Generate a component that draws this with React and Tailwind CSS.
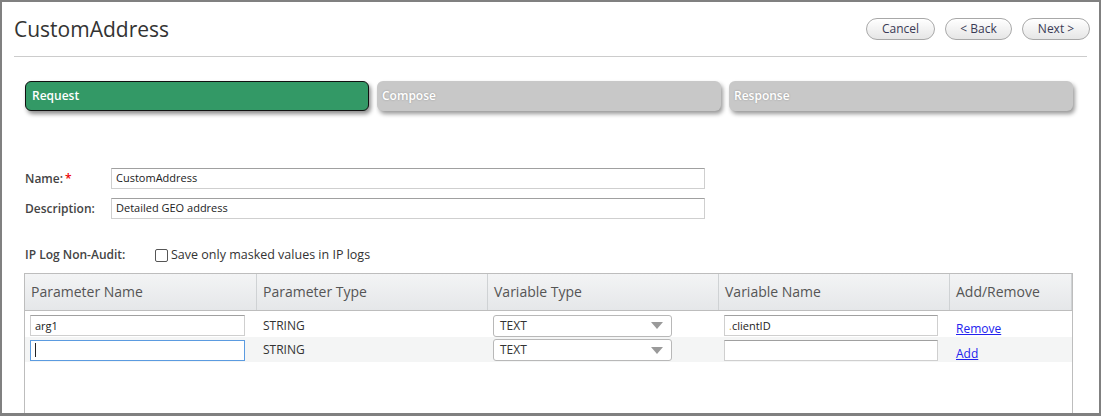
import React from "react";

const font = { fontFamily: '"Open Sans", "Noto Sans", Arial, sans-serif' };

function PillButton({ children, w }) {
  return (
    <button
      className={`h-[22px] ${w} rounded-full border border-[#a8a8a8] bg-gradient-to-b from-white to-[#e6e6e6] text-[12px] leading-none text-[#3a3a55] shadow-[inset_0_1px_0_#fff]`}
    >
      {children}
    </button>
  );
}

function Tab({ label, active }) {
  return (
    <div
      className={
        active
          ? "flex h-[30px] w-[344px] items-center rounded-[6px] border border-[#111] bg-[#339966] pl-[6px] text-[12px] font-semibold text-white shadow-[2px_3px_4px_rgba(0,0,0,0.45)]"
          : "flex h-[30px] w-[344px] items-center rounded-[6px] bg-[#c8c8c8] pl-[5px] text-[12px] font-semibold text-white shadow-[2px_3px_4px_rgba(0,0,0,0.4)] [text-shadow:0_0_2px_rgba(0,0,0,0.25)]"
      }
    >
      {label}
    </div>
  );
}

function TextInput({ value, w, focused }) {
  return (
    <div
      className={
        focused
          ? `flex h-[21px] ${w} items-center border border-[#5b9be0] bg-white pl-[4px] text-[11px] text-[#222]`
          : `flex h-[21px] ${w} items-center border border-[#cfcfcf] border-t-[#a0a0a0] bg-white pl-[4px] text-[11px] text-[#222]`
      }
    >
      {focused ? <span className="h-[14px] w-px bg-[#222]" /> : value}
    </div>
  );
}

function Select() {
  return (
    <div className="flex h-[22px] w-[179px] items-center justify-between rounded-[3px] border border-[#b8b8b8] bg-white pl-[6px] pr-[8px] text-[12px] text-[#333]">
      <span>TEXT</span>
      <svg width="12" height="7" viewBox="0 0 12 7">
        <path d="M0 0 L12 0 L6 7 Z" fill="#9a9a9a" />
      </svg>
    </div>
  );
}

const cols = ["Parameter Name", "Parameter Type", "Variable Type", "Variable Name", "Add/Remove"];
const gridCols = "grid grid-cols-[232px_231px_231px_231px_122px]";

export default function App() {
  return (
    <div
      style={font}
      className="h-[416px] w-[1101px] overflow-hidden border-2 border-b-[3px] border-[#808080] bg-white text-[#333]"
    >
      <div className="flex h-[54px] items-center justify-between pl-[12px] pr-[9px]">
        <h1 className="mt-[1px] text-[21px] font-normal text-[#333]">CustomAddress</h1>
        <div className="flex gap-[10px]">
          <PillButton w="w-[69px]">Cancel</PillButton>
          <PillButton w="w-[67px]">&lt; Back</PillButton>
          <PillButton w="w-[68px]">Next &gt;</PillButton>
        </div>
      </div>
      <div className="mx-[12px] border-t border-[#cccccc]" />

      <div className="mt-[24px] flex gap-[8px] pl-[23px]">
        <Tab label="Request" active />
        <Tab label="Compose" />
        <Tab label="Response" />
      </div>

      <div className="mt-[57px] flex flex-col gap-[9px] pl-[23px]">
        <div className="flex items-center">
          <label className="w-[86px] text-[12px] font-semibold text-[#444]">
            Name:<span className="ml-[2px] text-[#e00]">*</span>
          </label>
          <TextInput value="CustomAddress" w="w-[594px]" />
        </div>
        <div className="flex items-center">
          <label className="w-[86px] text-[12px] font-semibold text-[#444]">Description:</label>
          <TextInput value="Detailed GEO address" w="w-[594px]" />
        </div>
      </div>

      <div className="mt-[27px] flex items-center pl-[23px] text-[12px]">
        <span className="w-[130px] font-semibold text-[#444]">IP Log Non-Audit:</span>
        <span className="mr-[3px] h-[13px] w-[13px] rounded-[2px] border border-[#555] bg-white" />
        <span className="text-[12.5px] text-[#333]">Save only masked values in IP logs</span>
      </div>

      <div className="ml-[22px] mt-[8px] h-[200px] w-[1049px] border border-b-0 border-[#bdbdbd]">
        <div className={`${gridCols} h-[37px] border-b border-[#bdbdbd] bg-gradient-to-b from-[#f3f4f5] to-[#e5e7e9]`}>
          {cols.map((c) => (
            <div key={c} className="flex items-center border-r border-[#cfd2d4] pl-[6px] text-[14px] text-[#555]">
              {c}
            </div>
          ))}
        </div>
        <div className={`${gridCols} h-[26px] items-center bg-white text-[12px]`}>
          <div className="pl-[5px] pt-[3px]">
            <TextInput value="arg1" w="w-[215px]" />
          </div>
          <div className="pl-[6px] pt-[3px] text-[#333]">STRING</div>
          <div className="pl-[5px] pt-[3px]">
            <Select />
          </div>
          <div className="pl-[5px] pt-[3px]">
            <TextInput value={<span><span className="text-[#e0a040]">.</span>clientID</span>} w="w-[214px]" />
          </div>
          <div className="pl-[6px] pt-[9px]">
            <a href="#" className="text-[12px] text-[#2222ee] underline">Remove</a>
          </div>
        </div>
        <div className={`${gridCols} h-[25px] items-center bg-[#f4f5f5] text-[12px]`}>
          <div className="pl-[5px] pt-[1px]">
            <TextInput focused w="w-[215px]" />
          </div>
          <div className="pl-[6px] text-[#333]">STRING</div>
          <div className="pl-[5px] pt-[1px]">
            <Select />
          </div>
          <div className="pl-[5px] pt-[1px]">
            <TextInput value="" w="w-[214px]" />
          </div>
          <div className="pl-[6px] pt-[8px]">
            <a href="#" className="text-[12px] text-[#2222ee] underline">Add</a>
          </div>
        </div>
      </div>
    </div>
  );
}
